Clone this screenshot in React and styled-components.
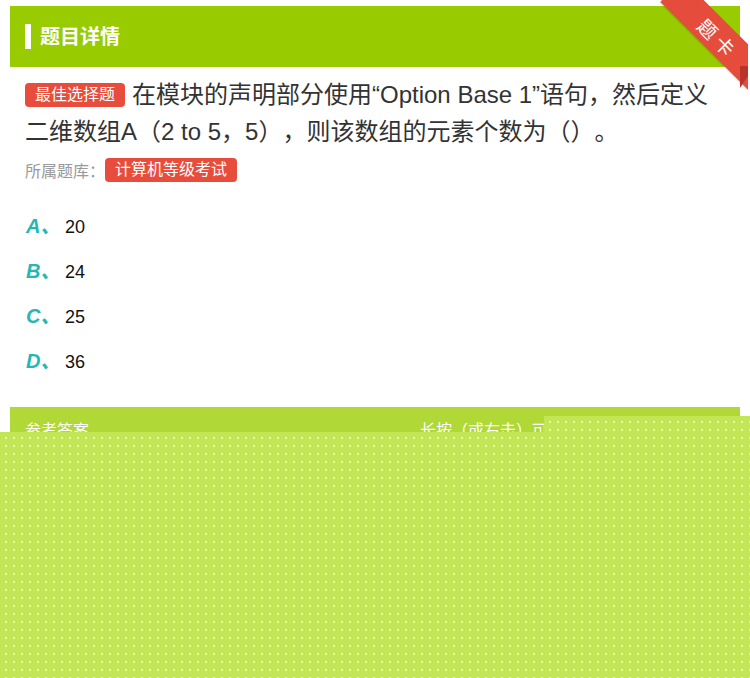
import React from "react";
import styled, { createGlobalStyle } from "styled-components";

const Global = createGlobalStyle`
  html, body { margin: 0; padding: 0; background: #fff; }
  body {
    font-family: "Liberation Sans", "Noto Sans CJK SC", sans-serif;
    text-spacing-trim: space-all;
  }
`;

const Page = styled.div`
  position: relative;
  width: 750px;
  height: 678px;
  overflow: hidden;
  background: #fff;
  padding-top: 6px;
  box-sizing: border-box;
`;

const Card = styled.div`
  margin: 0 10px;
  background: #fff;
`;

const Header = styled.div`
  height: 61px;
  background: #99cc00;
  display: flex;
  align-items: center;
  padding-left: 15px;
  gap: 9px;
`;

const Bar = styled.span`
  width: 6px;
  height: 25px;
  background: #fff;
`;

const Title = styled.h1`
  margin: 0;
  font-size: 20px;
  font-weight: bold;
  color: #fff;
  line-height: 1;
`;

const Body = styled.div`
  padding: 9px 15px 0;
`;

const Question = styled.div`
  font-size: 24px;
  line-height: 37px;
  color: #333;
  text-spacing-trim: space-all;
`;

const Tag = styled.span`
  display: inline-block;
  vertical-align: ${(p) => (p.$inline ? "3px" : "middle")};
  height: 24px;
  line-height: 24px;
  padding: 0 10px;
  border-radius: 4px;
  background: #e74c3c;
  color: #fff;
  font-size: 16px;
  margin-right: ${(p) => (p.$inline ? "7px" : "0")};
`;

const Meta = styled.div`
  display: flex;
  align-items: center;
  margin-top: 8px;
  font-size: 16px;
  color: #999;
  height: 24px;
  text-spacing-trim: space-all;
`;

const Options = styled.ul`
  list-style: none;
  margin: 22px 0 0;
  padding: 0;
  display: flex;
  flex-direction: column;
`;

const Option = styled.li`
  height: 45px;
  display: flex;
  align-items: baseline;
  line-height: 45px;
`;

const Letter = styled.span`
  width: 39px;
  font-size: 20px;
  font-style: italic;
  font-weight: bold;
  color: #25b8b3;
  padding-left: 1px;
`;

const Value = styled.span`
  font-size: 18px;
  color: #111;
`;

const AnswerBar = styled.div`
  margin-top: 23px;
  height: 44px;
  background: #b0d836;
  display: flex;
  align-items: center;
  justify-content: space-between;
  padding: 0 15px;
  color: #fff;
  font-size: 16px;
`;

const Hint = styled.span`
  width: 305px;
`;

const Ribbon = styled.div`
  position: absolute;
  top: 0;
  right: 2px;
  width: 92px;
  height: 90px;
  overflow: hidden;
  pointer-events: none;
`;

const Fold = styled.div`
  position: absolute;
  right: 0;
  bottom: 2px;
  width: 0;
  height: 0;
  border-left: 8px solid #b8342a;
  border-bottom: 12px solid transparent;
  border-top: 10px solid #b8342a;
`;

const Band = styled.div`
  position: absolute;
  left: -4px;
  top: 22px;
  width: 134px;
  height: 32px;
  background: #e64c3c;
  transform: rotate(45deg);
  display: flex;
  align-items: center;
  justify-content: center;
  color: #fff;
  font-size: 19px;
  letter-spacing: 5px;
  box-shadow: 0 1px 2px rgba(0, 0, 0, 0.15);
`;

const Overlay = styled.div`
  position: absolute;
  top: 416px;
  left: 0;
  right: 0;
  bottom: 0;
  background-color: #c2e655;
  background-image: radial-gradient(circle, rgba(240, 255, 200, 0.7) 0.8px, transparent 1.2px);
  background-size: 8px 8px;
  background-position: 2px 2px;
  clip-path: polygon(544px 0, 100% 0, 100% 100%, 0 100%, 0 16px, 544px 16px);
`;

const options = [
  ["A", "20"],
  ["B", "24"],
  ["C", "25"],
  ["D", "36"],
];

export default function App() {
  return (
    <Page>
      <Global />
      <Card>
        <Header>
          <Bar />
          <Title>题目详情</Title>
        </Header>
        <Body>
          <Question>
            <Tag $inline>最佳选择题</Tag>在模块的声明部分使用“Option Base 1”语句，然后定义二维数组A（2 to 5，5），则该数组的元素个数为（）。
          </Question>
          <Meta>
            所属题库：<Tag>计算机等级考试</Tag>
          </Meta>
          <Options>
            {options.map(([l, v]) => (
              <Option key={l}>
                <Letter>{l}、</Letter>
                <Value>{v}</Value>
              </Option>
            ))}
          </Options>
        </Body>
        <AnswerBar>
          <span>参考答案</span>
          <Hint>长按（或右击）可复制答案</Hint>
        </AnswerBar>
      </Card>
      <Ribbon>
        <Band>题卡</Band>
        <Fold />
      </Ribbon>
      <Overlay />
    </Page>
  );
}
